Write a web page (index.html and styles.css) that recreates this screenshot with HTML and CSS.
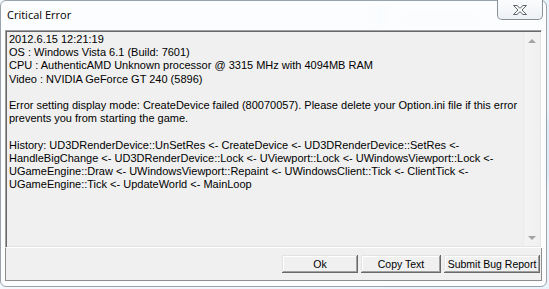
FILE: index.html
```html
<!DOCTYPE html>
<html>
<head>
<meta charset="utf-8">
<link rel="stylesheet" href="styles.css">
</head>
<body>
<div class="desk">
  <div class="glass g1"></div>
  <div class="glass g2"></div>
  <div class="glass g3"></div>
  <div class="window">
    <div class="titlebar">
      <span class="title">Critical Error</span>
      <div class="close">
        <svg width="16" height="12" viewBox="0 0 16 12">
          <path d="M1.5 1.5 H5 L8 4.3 L11 1.5 H14.5 L10 6 L14.5 10.5 H11 L8 7.7 L5 10.5 H1.5 L6 6 Z" fill="#fbfbfb" stroke="#5f656c" stroke-width="1" stroke-linejoin="round"/>
        </svg>
      </div>
    </div>
    <div class="client">
      <div class="edit">
        <div class="text">
          <div class="ln">2012.6.15 12:21:19</div>
          <div class="ln">OS : Windows Vista 6.1 (Build: 7601)</div>
          <div class="ln">CPU : AuthenticAMD Unknown processor @ 3315 MHz with 4094MB RAM</div>
          <div class="ln">Video : NVIDIA GeForce GT 240 (5896)</div>
          <div class="ln">&nbsp;</div>
          <div class="ln">Error setting display mode: CreateDevice failed (80070057). Please delete your Option.ini file if this error</div>
          <div class="ln">prevents you from starting the game.</div>
          <div class="ln">&nbsp;</div>
          <div class="ln">History: UD3DRenderDevice::UnSetRes &lt;- CreateDevice &lt;- UD3DRenderDevice::SetRes &lt;-</div>
          <div class="ln">HandleBigChange &lt;- UD3DRenderDevice::Lock &lt;- UViewport::Lock &lt;- UWindowsViewport::Lock &lt;-</div>
          <div class="ln">UGameEngine::Draw &lt;- UWindowsViewport::Repaint &lt;- UWindowsClient::Tick &lt;- ClientTick &lt;-</div>
          <div class="ln">UGameEngine::Tick &lt;- UpdateWorld &lt;- MainLoop</div>
        </div>
        <div class="vscroll">
          <div class="sbtn"><span class="tri up"></span></div>
          <div class="track"></div>
          <div class="sbtn"><span class="tri down"></span></div>
        </div>
      </div>
      <div class="buttons">
        <button class="btn b-ok">Ok</button>
        <button class="btn b-copy">Copy Text</button>
        <button class="btn b-submit">Submit Bug Report</button>
      </div>
    </div>
  </div>
</div>
</body>
</html>
```
FILE: styles.css
```css
html, body {
  margin: 0;
  padding: 0;
}
body {
  width: 549px;
  height: 289px;
  overflow: hidden;
  background: #eef6fc;
}
.desk {
  position: relative;
  width: 549px;
  height: 289px;
  background: linear-gradient(90deg, #f4f9fd 0%, #e9f4fc 100%);
}
.glass {
  position: absolute;
  background: #bfe0f7;
  filter: blur(4px);
  opacity: 0.55;
}
.g1 { left: 372px; top: 4px; width: 14px; height: 26px; }
.g2 { left: 400px; top: 16px; width: 80px; height: 8px; opacity: 0.4; }
.g3 { left: 540px; top: 120px; width: 9px; height: 60px; opacity: 0.6; }

.window {
  position: relative;
  border: 1px solid #9aa3ab;
  border-radius: 6px;
  background: rgba(252, 253, 254, 0.93);
  padding: 0 4px 0 4px;
  box-sizing: border-box;
  width: 547px;
  height: 287px;
  display: flex;
  flex-direction: column;
}
.titlebar {
  height: 29px;
  display: flex;
  align-items: flex-start;
  justify-content: space-between;
}
.title {
  font-family: "Open Sans", "Noto Sans", sans-serif;
  font-size: 11px;
  color: #000;
  margin-left: 2px;
  margin-top: 6px;
  line-height: 16px;
}
.close {
  width: 44px;
  height: 19px;
  margin-top: -1px;
  margin-right: -1px;
  border: 1px solid #8a9097;
  border-top: none;
  border-radius: 0 0 5px 5px;
  background: linear-gradient(#fbfcfd, #eef1f4);
  display: flex;
  align-items: center;
  justify-content: center;
}
.close svg { display: block; margin-top: 1px; }

.client {
  width: 537px;
  height: 251px;
  box-sizing: border-box;
  border: 1px solid #8e8e8e;
  border-top: none;
  background: #f0f0f0;
  display: flex;
  flex-direction: column;
}
.edit {
  height: 218px;
  flex: none;
  box-sizing: border-box;
  border-top: 1px solid #a0a0a0;
  border-left: 1px solid #a0a0a0;
  border-bottom: 1px solid #ffffff;
  border-right: 1px solid #ffffff;
  box-shadow: inset 1px 1px 0 #696969, inset -1px -1px 0 #e3e3e3;
  margin-left: -1px;
  margin-right: -1px;
  display: flex;
  background: #f0f0f0;
}
.text {
  flex: 1;
  padding: 2px 0 0 3px;
  font-family: "Liberation Sans", Arial, sans-serif;
  font-size: 11px;
  line-height: 13.2px;
  color: #000;
  overflow: hidden;
}
.ln { white-space: pre; height: 13.2px; }
.vscroll {
  width: 17px;
  margin: 1px 1px 1px 0;
  display: flex;
  flex-direction: column;
  background: linear-gradient(90deg, #e3e3e3 0px, #f3f3f3 1px, #f0f0f0 100%);
}
.sbtn {
  height: 17px;
  display: flex;
  align-items: center;
  justify-content: center;
}
.track { flex: 1; }
.tri {
  width: 0;
  height: 0;
  border-left: 4px solid transparent;
  border-right: 4px solid transparent;
}
.tri.up { border-bottom: 4px solid #a3a3a3; }
.tri.down { border-top: 4px solid #a3a3a3; }

.buttons {
  flex: 1;
  display: flex;
  justify-content: flex-end;
  align-items: flex-start;
  gap: 3px;
  padding: 7px 1px 0 0;
}
.btn {
  height: 18px;
  padding: 0;
  margin: 0;
  border: none;
  background: #f0f0f0;
  box-shadow: inset -1px -1px 0 #696969, inset 1px 1px 0 #e3e3e3, inset -2px -2px 0 #a0a0a0, inset 2px 2px 0 #ffffff;
  font-family: "Liberation Sans", Arial, sans-serif;
  font-size: 10.5px;
  color: #000;
  line-height: 16px;
}
.b-ok { width: 76px; }
.b-copy { width: 80px; }
.b-submit { width: 96px; }
```
